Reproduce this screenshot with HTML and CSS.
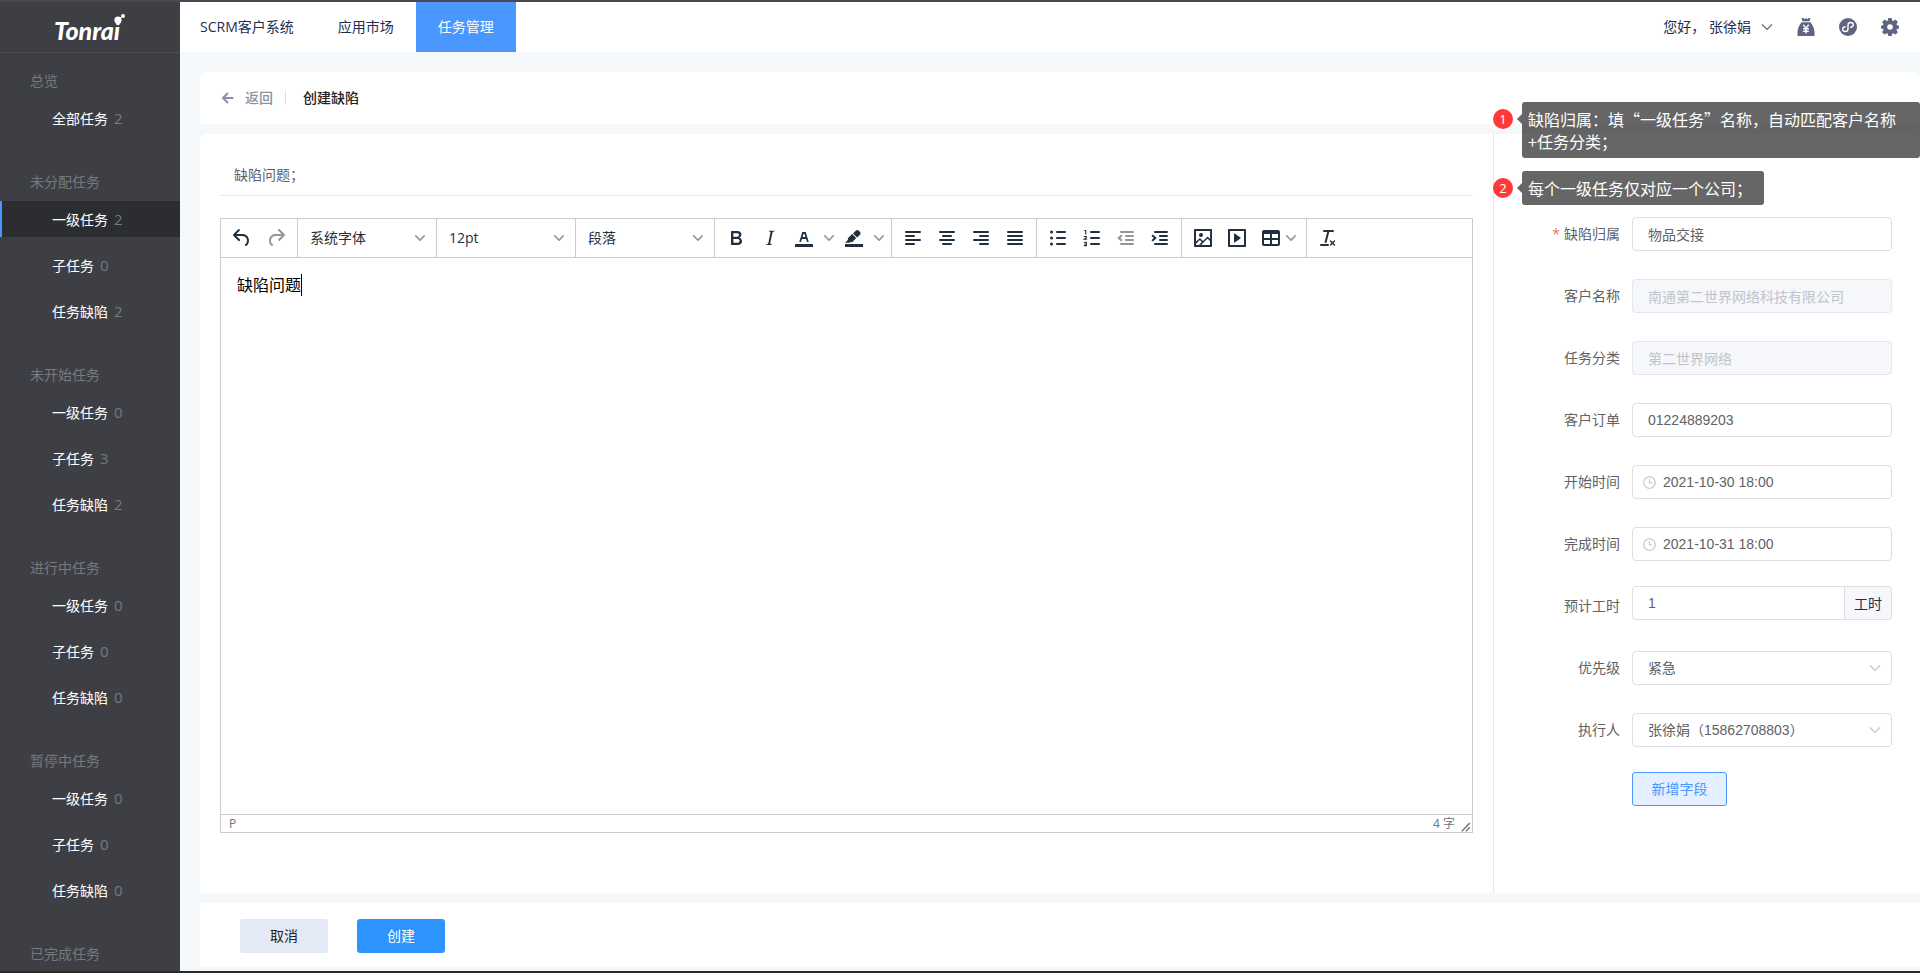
FILE: index.html
```html
<!DOCTYPE html>
<html lang="zh-CN">
<head>
<meta charset="utf-8">
<title>创建缺陷</title>
<link rel="stylesheet" href="styles.css">
</head>
<body>
<svg class="sprite" aria-hidden="true">
  <symbol id="chev" viewBox="0 0 10 10"><path d="M8.7 2.2c.3-.3.8-.3 1 0 .4.4.4.9 0 1.2L5.7 7.8c-.3.3-.9.3-1.2 0L.2 3.4a.8.8 0 010-1.2c.3-.3.8-.3 1.1 0L5 6l3.7-3.8z"/></symbol>
  <symbol id="chev-thin" viewBox="0 0 12 12"><path d="M1 3.500l5 5 5-5" fill="none" stroke="currentColor" stroke-width="1.100"/></symbol>
  <symbol id="clock" viewBox="0 0 14 14"><g fill="none" stroke="currentColor" stroke-width="1.200"><circle cx="7" cy="7" r="6.200"/><path d="M7 3.500v4h3.200"/></g></symbol>
</svg>
<div class="app">
  <aside class="sidebar">
    <div class="logo">Tonrai
      <svg class="logo-dots" viewBox="0 0 14 14"><path d="M3 8.500l6-5" stroke="#fff" stroke-width="1"/><circle cx="5" cy="7" r="3.600"/><circle cx="10" cy="3" r="2"/></svg>
    </div>
    <nav class="menu">
      <section class="group"><h2>总览</h2>
        <a href="#">全部任务<span>2</span></a></section>
      <section class="group"><h2>未分配任务</h2>
        <a href="#" class="active">一级任务<span>2</span></a><a href="#">子任务<span>0</span></a><a href="#">任务缺陷<span>2</span></a></section>
      <section class="group"><h2>未开始任务</h2>
        <a href="#">一级任务<span>0</span></a><a href="#">子任务<span>3</span></a><a href="#">任务缺陷<span>2</span></a></section>
      <section class="group"><h2>进行中任务</h2>
        <a href="#">一级任务<span>0</span></a><a href="#">子任务<span>0</span></a><a href="#">任务缺陷<span>0</span></a></section>
      <section class="group"><h2>暂停中任务</h2>
        <a href="#">一级任务<span>0</span></a><a href="#">子任务<span>0</span></a><a href="#">任务缺陷<span>0</span></a></section>
      <section class="group"><h2>已完成任务</h2></section>
    </nav>
  </aside>

  <div class="page">
    <header class="topbar">
      <nav class="tabs">
        <a href="#">SCRM客户系统</a><a href="#">应用市场</a><a href="#" class="active">任务管理</a>
      </nav>
      <div class="tools">
        <button class="user">您好， 张徐娟<svg class="user-chev"><use href="#chev-thin"/></svg></button>
        <button aria-label="财务"><svg viewBox="0 0 18 18"><path d="M4.500 0h2l1 1.200L9 0l1.500 1.200L11.500 0h2l-1 3.200h-7zM4.800 4.200h8.400C15.500 6.500 17 9.500 17.500 13.500V18H.5v-4.500C1 9.500 2.500 6.500 4.800 4.200z"/><path d="M6.300 6.800L9 10.200l2.700-3.400M9 10.200V15.500M6.200 10.800h5.600M6.200 13.200h5.600" fill="none" stroke="#fff" stroke-width="1.400"/></svg></button>
        <button aria-label="小程序"><svg viewBox="0 0 18 18"><circle cx="9" cy="9" r="9"/><path d="M6.200 8.700C4.500 9 3.700 10 3.700 11.200c0 1.400 1.200 2.300 2.500 2.300 1.500 0 2.800-1.100 2.800-2.600V7.100c0-1.500 1.300-2.600 2.800-2.600 1.300 0 2.500.9 2.500 2.300 0 1.200-.8 2.200-2.500 2.500" fill="none" stroke="#fff" stroke-width="1.400" stroke-linecap="round"/></svg></button>
        <button aria-label="设置"><svg viewBox="0 0 18 18"><path fill-rule="evenodd" d="M7.300 0h3.400l.5 2.500 1.200.5 2.100-1.400 2.400 2.400-1.400 2.100.5 1.200 2 .4v2.700l-2 .5-.5 1.200 1.400 2.100-2.400 2.400-2.100-1.400-1.200.5-.5 2.300H7.300l-.5-2.300-1.200-.5-2.100 1.400-2.400-2.400 1.400-2.100-.5-1.200-2-.5V7.700l2-.4.5-1.200L1.100 4l2.400-2.400L5.600 3l1.200-.5zM9 6.200a2.800 2.800 0 100 5.600 2.800 2.800 0 000-5.600z"/></svg></button>
      </div>
    </header>

    <main class="content">
      <div class="card crumb">
        <a href="#" class="back"><svg viewBox="0 0 12 12"><path d="M11.500 6H1.500M6 1L1 6l5 5" fill="none" stroke="currentColor" stroke-width="2"/></svg>返回</a>
        <h1>创建缺陷</h1>
      </div>

      <div class="card work">
        <div class="left">
          <input class="subject" aria-label="标题" value="缺陷问题；">
          <div class="editor">
            <div class="toolbar">
              <div class="tg">
                <button aria-label="撤销"><svg viewBox="0 0 24 24"><path d="M6.400 8H12c3.700 0 6.200 2 6.800 5.100.6 2.700-.4 5.600-2.300 6.800a1 1 0 01-1-1.800c1.100-.6 1.800-2.700 1.400-4.600-.5-2.100-2.100-3.500-4.900-3.500H6.400l3.300 3.300a1 1 0 11-1.400 1.400l-5-5a1 1 0 010-1.400l5-5a1 1 0 011.400 1.400L6.400 8z"/></svg></button>
                <button aria-label="重做" disabled><svg viewBox="0 0 24 24"><path d="M17.600 10H12c-2.800 0-4.400 1.400-4.900 3.500-.4 2 .3 4 1.400 4.600a1 1 0 11-1 1.800c-2-1.200-2.900-4.100-2.300-6.800.6-3 3-5.100 6.800-5.100h5.600l-3.300-3.300a1 1 0 111.400-1.400l5 5a1 1 0 010 1.400l-5 5a1 1 0 01-1.400-1.400l3.300-3.300z"/></svg></button>
              </div>
              <div class="tg pick"><select aria-label="字体"><option>系统字体</option></select><svg><use href="#chev"/></svg></div>
              <div class="tg pick"><select aria-label="字号"><option>12pt</option></select><svg><use href="#chev"/></svg></div>
              <div class="tg pick"><select aria-label="段落格式"><option>段落</option></select><svg><use href="#chev"/></svg></div>
              <div class="tg">
                <button aria-label="粗体"><svg viewBox="0 0 24 24"><path d="M7.800 19c-.3 0-.5 0-.6-.2l-.2-.5V5.700c0-.2 0-.4.2-.5l.6-.2h5c1.500 0 2.700.3 3.500 1 .7.6 1.100 1.400 1.100 2.500a3 3 0 01-.6 1.900c-.4.6-1 1-1.600 1.200.4.100.9.300 1.300.6s.8.700 1 1.200c.4.400.5 1 .5 1.600 0 1.300-.4 2.300-1.300 3-.8.700-2.100 1-3.800 1H7.800zm5-8.300c.6 0 1.200-.1 1.600-.5.4-.3.600-.7.600-1.300 0-1.100-.8-1.700-2.300-1.700H9.300v3.500h3.400zm.5 6c.7 0 1.300-.1 1.700-.4.4-.4.600-.9.600-1.500s-.2-1-.7-1.400c-.4-.3-1-.4-2-.4H9.400v3.800h4z" fill-rule="evenodd"/></svg></button>
                <button aria-label="斜体"><svg viewBox="0 0 24 24"><path d="M16.700 4.700l-.1.900h-.3c-.6 0-1 0-1.400.3-.3.300-.4.600-.5 1.100l-2.100 9.800v.6c0 .5.400.8 1.400.8h.2l-.2.800H8l.2-.8h.2c1.100 0 1.800-.5 2-1.500l2-9.800.1-.5c0-.6-.4-.8-1.400-.8h-.3l.2-.9h5.700z"/></svg></button>
                <button class="split" aria-label="文字颜色"><svg viewBox="0 0 24 24"><path d="M3 18h18v3H3z"/><path fill-rule="evenodd" d="M8.700 16h-.8a.5.5 0 01-.5-.6l2.700-9c.1-.3.3-.4.5-.4h2.800c.2 0 .4.100.5.4l2.700 9a.5.5 0 01-.5.600h-.8a.5.5 0 01-.4-.4l-.7-2.200c0-.3-.3-.4-.5-.4h-3.400c-.2 0-.4.100-.5.4l-.7 2.200c0 .3-.2.400-.4.400zm2.600-7.600l-.6 2a.5.5 0 00.5.6h1.600a.5.5 0 00.5-.6l-.6-2c0-.3-.3-.4-.5-.4h-.4c-.2 0-.4.100-.5.4z"/></svg><svg class="cv"><use href="#chev"/></svg></button>
                <button class="split" aria-label="背景颜色"><svg viewBox="0 0 24 24"><path d="M3 18h18v3H3z"/><path d="M7.700 16.700H3l3.300-3.300-.7-.8L10.200 8l4 4.100-4 4.200c-.2.200-.6.200-.8 0l-.6-.7-1.100 1.100zm5-7.500L11 7.400l3-2.900a2 2 0 012.600 0L18 6c.7.700.7 2 0 2.700l-2.900 2.900-1.800-1.800-.5-.6z"/></svg><svg class="cv"><use href="#chev"/></svg></button>
              </div>
              <div class="tg">
                <button aria-label="左对齐"><svg class="ln" viewBox="0 0 24 24"><path d="M5 6h14M5 10h8M5 14h14M5 18h8"/></svg></button>
                <button aria-label="居中"><svg class="ln" viewBox="0 0 24 24"><path d="M5 6h14M8 10h8M5 14h14M8 18h8"/></svg></button>
                <button aria-label="右对齐"><svg class="ln" viewBox="0 0 24 24"><path d="M5 6h14M11 10h8M5 14h14M11 18h8"/></svg></button>
                <button aria-label="两端对齐"><svg class="ln" viewBox="0 0 24 24"><path d="M5 6h14M5 10h14M5 14h14M5 18h14"/></svg></button>
              </div>
              <div class="tg">
                <button aria-label="项目符号"><svg class="ln" viewBox="0 0 24 24"><path d="M11 6h8M11 12h8M11 18h8"/><path d="M5.500 6h.01M5.500 12h.01M5.500 18h.01" stroke-width="3"/></svg></button>
                <button aria-label="编号"><svg class="ln" viewBox="0 0 24 24"><path d="M11 6h8M11 12h8M11 18h8"/><path d="M4.700 4.500h1V8M4.300 10.500h2v1.300l-2 1.500h2.300M4.300 16.300h2.100v3.300H4.300M4.600 18h1.500" stroke-width="1.100"/></svg></button>
                <button aria-label="减少缩进" disabled><svg class="ln" viewBox="0 0 24 24"><path d="M7 6h12M12 10h7M12 14h7M7 18h12M7.300 9.700L4.700 12l2.600 2.300"/></svg></button>
                <button aria-label="增加缩进"><svg class="ln" viewBox="0 0 24 24"><path d="M7 6h12M12 10h7M12 14h7M7 18h12M4.700 9.700L7.300 12l-2.600 2.300"/></svg></button>
              </div>
              <div class="tg">
                <button aria-label="图片"><svg viewBox="0 0 24 24"><path fill-rule="evenodd" d="M5 15.700l3.300-3.200c.3-.3.700-.3 1 0L12 15l4.100-4c.3-.4.800-.4 1 0l2 1.900V5H5v10.700zM5 18v1h3l2.800-2.900-2-2L5 17.900zm14-3l-2.500-2.400-6.400 6.500H19v-4zM4 3h16c.6 0 1 .4 1 1v16c0 .6-.4 1-1 1H4a1 1 0 01-1-1V4c0-.6.4-1 1-1zm6 8a2 2 0 100-4 2 2 0 000 4z"/></svg></button>
                <button aria-label="视频"><svg viewBox="0 0 24 24"><path fill-rule="evenodd" d="M4 3h16c.6 0 1 .4 1 1v16c0 .6-.4 1-1 1H4a1 1 0 01-1-1V4c0-.6.4-1 1-1zm1 2v14h14V5H5zm4.800 2.600l5.600 4a.5.5 0 010 .8l-5.600 4A.5.5 0 019 16V8a.5.5 0 01.8-.4z"/></svg></button>
                <button class="split narrow" aria-label="表格"><svg viewBox="0 0 24 24"><path fill-rule="evenodd" d="M19 4a2 2 0 012 2v12a2 2 0 01-2 2H5a2 2 0 01-2-2V6c0-1.100.9-2 2-2h14zM5 14v4h6v-4H5zm14 0h-6v4h6v-4zm0-6h-6v4h6V8zM5 12h6V8H5v4z"/></svg><svg class="cv"><use href="#chev"/></svg></button>
              </div>
              <div class="tg">
                <button aria-label="清除格式"><svg viewBox="0 0 24 24"><path d="M13.200 6a1 1 0 010 .2l-2.600 10a1 1 0 01-1 .8h-.2a.8.800 0 01-.8-1l2.600-10H8a1 1 0 110-2h9a1 1 0 010 2h-3.800zM5 18h7a1 1 0 010 2H5a1 1 0 010-2zm13 1.500L16.500 18 15 19.500a.7.700 0 01-1-1l1.500-1.500-1.500-1.500a.7.700 0 011-1l1.500 1.500 1.500-1.500a.7.700 0 011 1L17.500 17l1.500 1.500a.7.700 0 01-1 1z"/></svg></button>
              </div>
            </div>
            <div class="body" contenteditable="true" role="textbox" aria-label="正文"><span class="caret">缺陷问题</span></div>
            <div class="status"><span>P</span><span class="count">4 字</span><svg viewBox="0 0 10 10"><path d="M.8 9.200l8-8.200M5 9.200L8.800 5.300" fill="none" stroke="currentColor" stroke-width="1.400"/></svg></div>
          </div>
        </div>

        <form class="right">
          <div class="tip tip-a"><i>1</i><p>缺陷归属：填“一级任务”名称，自动匹配客户名称<br>+任务分类；</p></div>
          <div class="tip tip-b"><i>2</i><p>每个一级任务仅对应一个公司；</p></div>
          <div class="row"><label for="f1"><b>*</b>缺陷归属</label><input id="f1" value="物品交接"></div>
          <div class="row"><label for="f2">客户名称</label><input id="f2" value="南通第二世界网络科技有限公司" disabled></div>
          <div class="row"><label for="f3">任务分类</label><input id="f3" value="第二世界网络" disabled></div>
          <div class="row"><label for="f4">客户订单</label><input id="f4" value="01224889203"></div>
          <div class="row"><label for="f5">开始时间</label><div class="field date"><svg><use href="#clock"/></svg><input id="f5" value="2021-10-30 18:00"></div></div>
          <div class="row"><label for="f6">完成时间</label><div class="field date"><svg><use href="#clock"/></svg><input id="f6" value="2021-10-31 18:00"></div></div>
          <div class="row hours"><label for="f7">预计工时</label><div class="field unit"><input id="f7" value="1"><span>工时</span></div></div>
          <div class="row"><label for="f8">优先级</label><div class="field drop"><select id="f8"><option>紧急</option></select><svg><use href="#chev-thin"/></svg></div></div>
          <div class="row"><label for="f9">执行人</label><div class="field drop"><select id="f9"><option>张徐娟（15862708803）</option></select><svg><use href="#chev-thin"/></svg></div></div>
          <button type="button" class="add">新增字段</button>
        </form>
      </div>

      <footer class="card actions">
        <button class="cancel">取消</button>
        <button class="create">创建</button>
      </footer>
    </main>
  </div>
</div>
</body>
</html>
```

FILE: styles.css
```css
* { box-sizing: border-box; }
body {
  margin: 0;
  font: 14px/20px "Open Sans", "Noto Sans CJK SC", sans-serif;
  color: #1f2d50;
  background: #f4f8fb;
}
button, input, select { font: inherit; color: inherit; margin: 0; }
button { border: 0; padding: 0; background: none; cursor: pointer; }
a { color: inherit; text-decoration: none; }
svg { display: block; fill: currentColor; flex: none; }
.sprite { position: absolute; width: 0; height: 0; }

.app {
  display: flex;
  min-height: 100vh;
  border-top: 2px solid #4b4750;
  border-bottom: 2px solid #2c2827;
}

/* sidebar */
.sidebar { flex: none; width: 180px; background: #3e3f44; }
.logo {
  position: relative;
  height: 51px;
  padding-left: 54px;
  border-bottom: 1px solid #4d4e53;
  color: #fff;
  font: italic 900 25px/56px Lato, sans-serif;
}
.logo-dots { position: absolute; left: 113px; top: 11px; width: 14px; height: 14px; }
.menu { padding-top: 18px; }
.group { margin-bottom: 36px; }
.group h2 {
  margin: 0 0 9px;
  padding-left: 30px;
  font-size: 14px;
  line-height: 20px;
  font-weight: 400;
  color: #77797d;
}
.group:last-child, .group:last-child h2 { margin-bottom: 0; }
.group a {
  display: block;
  height: 36px;
  padding-left: 50px;
  border-left: 2px solid transparent;
  line-height: 36px;
  color: #fff;
}
.group a + a { margin-top: 10px; }
.group a span { margin-left: 6px; font-size: 15px; color: #77797d; }
.group a.active { background: #2c2d31; border-left-color: #4a97ff; }

/* top bar */
.page { flex: 1; min-width: 0; display: flex; flex-direction: column; }
.topbar {
  display: flex;
  justify-content: space-between;
  height: 50px;
  padding-right: 21px;
  background: #fff;
}
.tabs { display: flex; }
.tabs a { padding: 0 22px; line-height: 50px; }
.tabs a:first-child { padding-left: 20px; }
.tabs .active { background: #4a97ff; color: #fff; }
.tools { display: flex; align-items: center; gap: 24px; color: #5f6580; }
.tools svg { width: 18px; height: 18px; }
.tools .user { display: flex; align-items: center; color: #1f2d50; }
.tools .user-chev { width: 12px; height: 12px; margin-left: 10px; color: #5f6580; }

/* content */
.content {
  flex: 1;
  display: flex;
  flex-direction: column;
  gap: 10px;
  padding: 20px 0 4px 20px;
}
.card { background: #fff; border-radius: 6px 6px 0 0; }
.crumb { display: flex; align-items: center; height: 52px; padding-left: 22px; }
.back {
  display: flex;
  align-items: center;
  gap: 11px;
  padding-right: 12px;
  border-right: 1px solid #dcdfe6;
  line-height: 14px;
  font-weight: 500;
  color: #8793a5;
}
.back svg { width: 12px; height: 12px; }
.crumb h1 { margin: 0 0 0 17px; font-size: 14px; font-weight: 500; color: #222; }
.work { flex: 1; display: flex; }
.left {
  flex: 1;
  min-width: 0;
  display: flex;
  flex-direction: column;
  padding: 20px 20px 60px 20px;
  border-right: 1px solid #e4e7ed;
}
.subject {
  height: 42px;
  margin-bottom: 22px;
  padding: 0 14px 2px;
  border: 0;
  border-bottom: 1px solid #e4e7ed;
  color: #606266;
}

/* editor */
.editor { flex: 1; display: flex; flex-direction: column; border: 1px solid #ccc; color: #222f3e; }
.toolbar { display: flex; height: 39px; border-bottom: 1px solid #ccc; }
.tg { display: flex; align-items: center; padding: 0 4px; border-right: 1px solid #ccc; }
.tg:last-child { border-right: 0; }
.tg button { display: flex; align-items: center; justify-content: center; width: 34px; height: 34px; }
.tg button svg { width: 24px; height: 24px; }
.tg button:disabled { color: #90979f; }
.tg .split { width: 50px; justify-content: flex-start; padding-left: 5px; gap: 8px; }
.tg .narrow { width: 48px; gap: 3px; }
.tg .split .cv { width: 10px; height: 10px; color: #90979f; }
.ln { fill: none; stroke: currentColor; stroke-width: 2; stroke-linecap: round; }
.pick { position: relative; width: 139px; padding: 0; }
.pick select { width: 100%; height: 34px; padding: 0 28px 0 12px; border: 0; background: none; appearance: none; }
.pick svg { position: absolute; right: 11px; width: 10px; height: 10px; color: #90979f; pointer-events: none; }
.body { flex: 1; padding: 16px; font-size: 16px; line-height: 22px; color: #000; outline: 0; }
.caret { display: inline-block; border-right: 1px solid #000; }
.status {
  display: flex;
  align-items: center;
  height: 18px;
  padding: 0 1px 0 8px;
  border-top: 1px solid #ccc;
  font-size: 12px;
  line-height: 16px;
  color: #6b727b;
}
.count { margin-left: auto; }
.status svg { width: 10px; height: 10px; margin-left: 6px; align-self: flex-end; }

/* form */
.right {
  position: relative;
  width: 426px;
  display: flex;
  flex-direction: column;
  gap: 28px;
  padding: 83px 28px 0 0;
  color: #606266;
}
.row { display: grid; grid-template-columns: 126px 1fr; gap: 12px; line-height: 34px; }
.row label { text-align: right; }
.row label b { margin-right: 4px; font-weight: 400; color: #f56c6c; }
.row input, .row select {
  width: 100%;
  height: 34px;
  padding: 0 15px;
  border: 1px solid #dcdfe6;
  border-radius: 4px;
  background: #fff;
  font-family: "Liberation Sans", "Noto Sans CJK SC", sans-serif;
  line-height: 20px;
  appearance: none;
}
.row input:disabled { background: #f5f7fa; border-color: #e4e7ed; color: #c0c4cc; }
.field { position: relative; height: 34px; }
.field > svg { position: absolute; top: 11px; color: #c0c4cc; pointer-events: none; }
.date > svg { left: 11px; width: 13px; height: 13px; }
.row .date input { padding-left: 30px; }
.drop > svg { right: 11px; width: 12px; height: 12px; }
.hours { margin: -3px 0; line-height: 40px; }
.unit { display: flex; }
.row .unit input { flex: 1; min-width: 0; border-radius: 4px 0 0 4px; }
.unit span {
  width: 47px;
  border: 1px solid #dcdfe6;
  border-left: 0;
  border-radius: 0 4px 4px 0;
  background: #f5f7fa;
  line-height: 34px;
  text-align: center;
  color: #1f2d50;
}
.add {
  width: 95px;
  height: 34px;
  margin: -3px 0 0 138px;
  border: 1px solid #4a97ff;
  border-radius: 3px;
  background: #e4efff;
  color: #4a97ff;
}
.tip { position: absolute; left: -1px; display: flex; align-items: flex-start; gap: 9px; color: #fff; }
.tip-a { top: -32px; right: 0; }
.tip-b { top: 37px; }
.tip i {
  width: 20px;
  height: 20px;
  margin-top: 7px;
  border-radius: 50%;
  background: #ff3838;
  font-style: normal;
  font-size: 13px;
  line-height: 20px;
  text-align: center;
}
.tip p {
  position: relative;
  margin: 0;
  padding: 6px;
  border-radius: 3px;
  background: rgba(0, 0, 0, .6);
  font: 16px/22px "Noto Sans CJK SC", sans-serif;
}
.tip-a p { flex: 1; }
.tip-b p { padding-right: 12px; }
.tip p::before {
  content: "";
  position: absolute;
  left: -5px;
  top: 12px;
  border: 5px solid transparent;
  border-left: 0;
  border-right-color: rgba(0, 0, 0, .6);
}

/* footer */
.actions { display: flex; align-items: flex-start; gap: 29px; padding: 16px 40px 14px; border-radius: 0; }
.actions button { width: 88px; height: 34px; border-radius: 3px; }
.cancel { background: #e4eaf5; color: #222; }
.create { background: #2d94ff; color: #fff; }
```
